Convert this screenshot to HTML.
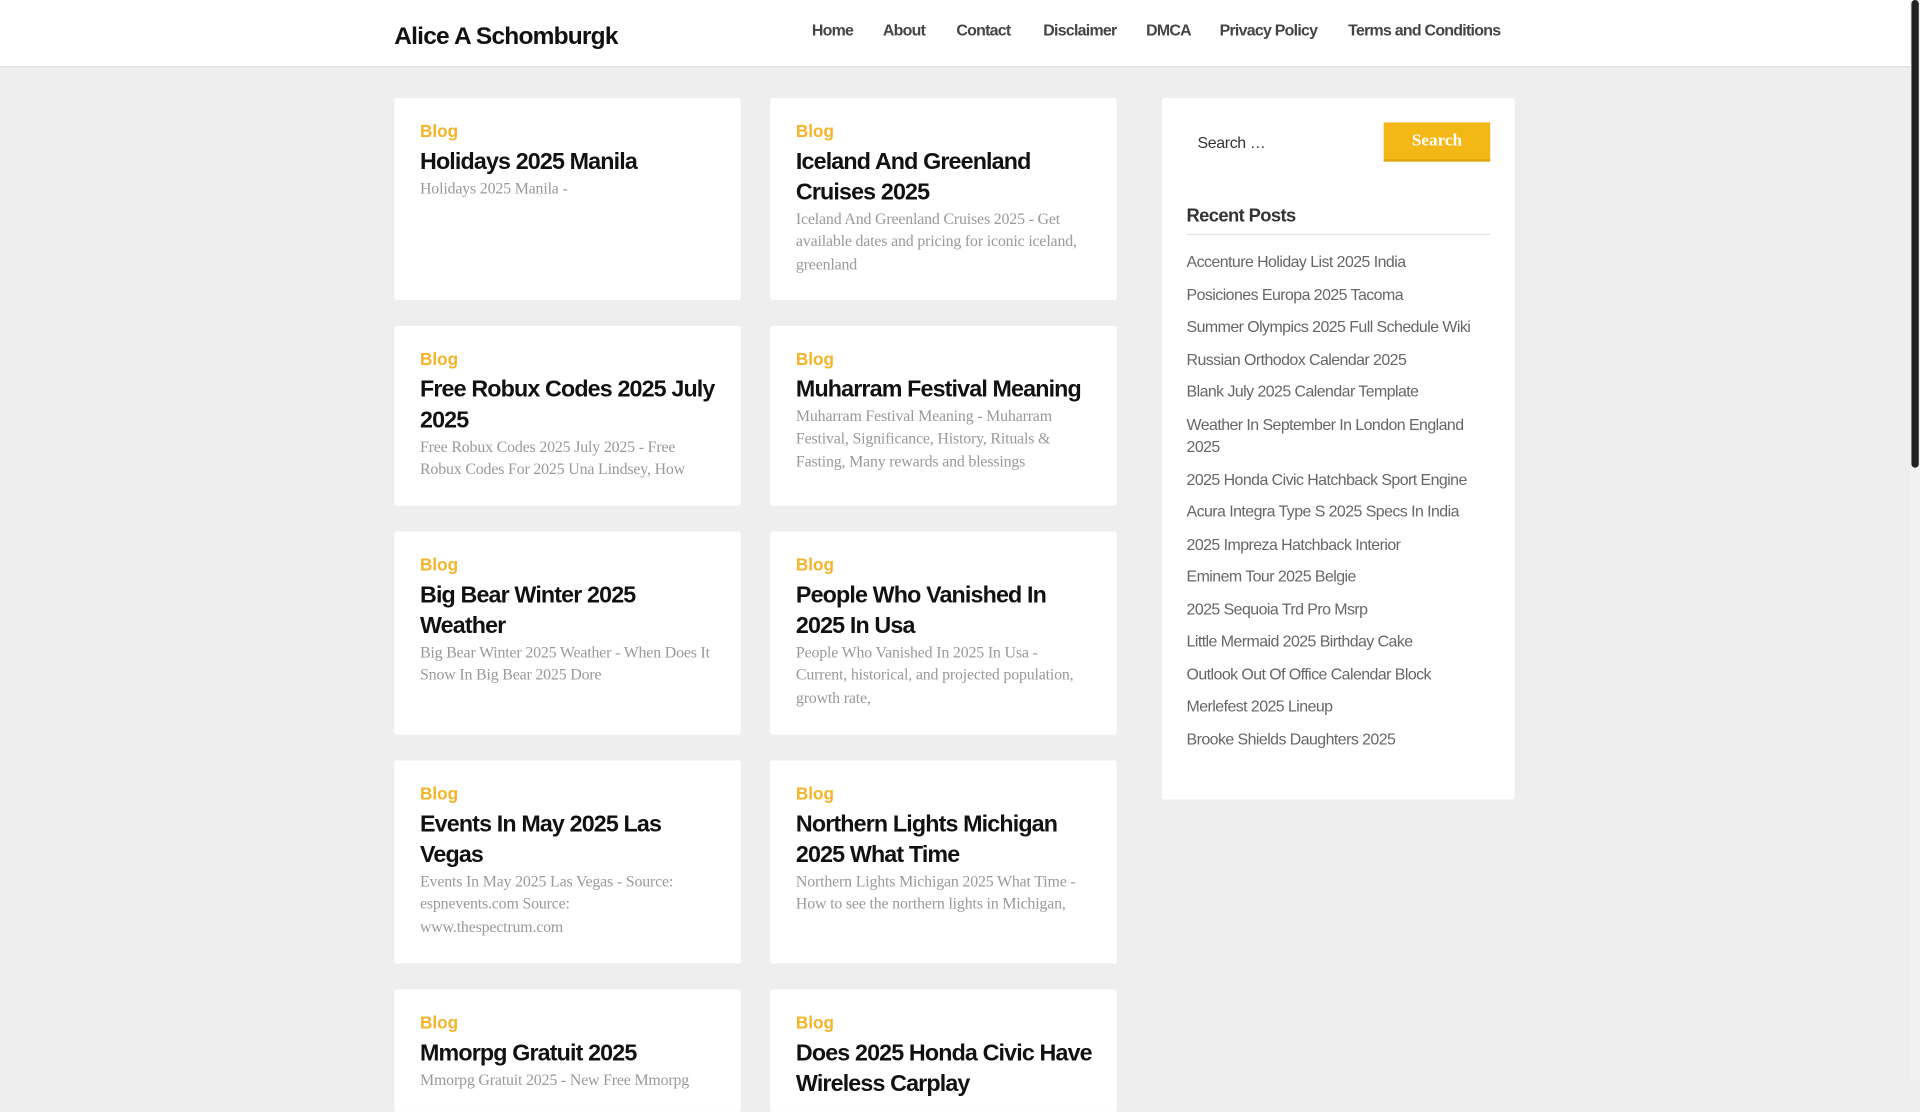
<!DOCTYPE html>
<html><head><meta charset="utf-8"><style>
html,body{margin:0;padding:0;overflow:hidden;width:1920px;height:1080px;background:#eee}
#w{position:absolute;left:0;top:0;width:1568px;height:882px;transform:scale(1.22449);transform-origin:0 0;font-family:"Liberation Sans",sans-serif;background:#eee}
.hdr{position:absolute;left:0;top:0;width:1560px;height:54px;background:#fff;border-bottom:1px solid #ddd}
.logo{position:absolute;left:322px;top:19px;font-size:20px;font-weight:bold;color:#111;letter-spacing:-0.65px}
.nav{position:absolute;top:17px;font-size:13px;font-weight:bold;color:#444;letter-spacing:-0.6px}
.card{position:absolute;background:#fff;border-radius:2px;box-sizing:border-box;padding:0 20px;width:283px}
.cat{position:absolute;left:21px;top:19px;font-size:14px;font-weight:bold;color:#f5b428}
.t{position:absolute;left:21px;right:14px;top:40px;font-size:19px;font-weight:bold;color:#111;line-height:25.3px;letter-spacing:-0.7px}
.ex{font-family:"Liberation Serif",serif;font-size:13px;line-height:18.3px;color:#999;position:absolute;left:21px;right:20px;letter-spacing:-0.15px}
.side{position:absolute;left:949px;top:80px;width:288px;height:573px;background:#fff;border-radius:2px}
.side li{list-style:none;font-size:13px;color:#666;line-height:18.5px;margin-bottom:8px;letter-spacing:-0.45px}
.sb{position:absolute;left:1560px;top:0;width:8px;height:882px;background:#f1f1f1}
.th{position:absolute;left:1561px;top:0;width:6px;height:382px;background:#222;border-radius:3px}
</style></head><body><div id="w">
<div class="hdr"></div>
<div class="logo">Alice A Schomburgk</div>
<div class="nav" style="left:663px">Home</div>
<div class="nav" style="left:721px">About</div>
<div class="nav" style="left:781px">Contact</div>
<div class="nav" style="left:852px">Disclaimer</div>
<div class="nav" style="left:936px">DMCA</div>
<div class="nav" style="left:996px">Privacy Policy</div>
<div class="nav" style="left:1101px">Terms and Conditions</div>

<div class="card" style="left:322px;top:80px;height:165px"><div class="cat">Blog</div><div class="t">Holidays 2025 Manila</div><div class="ex" style="top:65px">Holidays 2025 Manila -</div></div>
<div class="card" style="left:629px;top:80px;height:165px"><div class="cat">Blog</div><div class="t">Iceland And Greenland Cruises 2025</div><div class="ex" style="top:90px">Iceland And Greenland Cruises 2025 - Get available dates and pricing for iconic iceland, greenland</div></div>

<div class="card" style="left:322px;top:266px;height:147px"><div class="cat">Blog</div><div class="t">Free Robux Codes 2025 July 2025</div><div class="ex" style="top:90px">Free Robux Codes 2025 July 2025 - Free Robux Codes For 2025 Una Lindsey, How</div></div>
<div class="card" style="left:629px;top:266px;height:147px"><div class="cat">Blog</div><div class="t">Muharram Festival Meaning</div><div class="ex" style="top:65px">Muharram Festival Meaning - Muharram Festival, Significance, History, Rituals &amp; Fasting, Many rewards and blessings</div></div>

<div class="card" style="left:322px;top:434px;height:166px"><div class="cat">Blog</div><div class="t">Big Bear Winter 2025 Weather</div><div class="ex" style="top:90px">Big Bear Winter 2025 Weather - When Does It Snow In Big Bear 2025 Dore</div></div>
<div class="card" style="left:629px;top:434px;height:166px"><div class="cat">Blog</div><div class="t">People Who Vanished In 2025 In Usa</div><div class="ex" style="top:90px">People Who Vanished In 2025 In Usa - Current, historical, and projected population, growth rate,</div></div>

<div class="card" style="left:322px;top:621px;height:166px"><div class="cat">Blog</div><div class="t">Events In May 2025 Las Vegas</div><div class="ex" style="top:90px">Events In May 2025 Las Vegas - Source: espnevents.com Source: www.thespectrum.com</div></div>
<div class="card" style="left:629px;top:621px;height:166px"><div class="cat">Blog</div><div class="t">Northern Lights Michigan 2025 What Time</div><div class="ex" style="top:90px">Northern Lights Michigan 2025 What Time - How to see the northern lights in Michigan,</div></div>

<div class="card" style="left:322px;top:808px;height:100px"><div class="cat">Blog</div><div class="t">Mmorpg Gratuit 2025</div><div class="ex" style="top:65px">Mmorpg Gratuit 2025 - New Free Mmorpg</div></div>
<div class="card" style="left:629px;top:808px;height:100px"><div class="cat">Blog</div><div class="t">Does 2025 Honda Civic Have Wireless Carplay</div></div>

<div class="side">
<div style="position:absolute;left:29px;top:29px;font-size:13px;color:#333;letter-spacing:-0.3px">Search …</div>
<div style="position:absolute;left:181px;top:20px;width:87px;height:30px;background:#f3b716;border-bottom:2px solid #dea60e;color:#fff;font-family:'Liberation Serif',serif;font-weight:bold;font-size:14px;text-align:center;line-height:31px">Search</div>
<div style="position:absolute;left:20px;top:88px;font-size:15px;font-weight:bold;color:#333;letter-spacing:-0.5px">Recent Posts</div>
<div style="position:absolute;left:20px;top:111px;width:248px;height:1px;background:#e2e2e2"></div>
<ul style="position:absolute;left:20px;top:125px;width:250px;margin:0;padding:0">
<li>Accenture Holiday List 2025 India</li>
<li>Posiciones Europa 2025 Tacoma</li>
<li>Summer Olympics 2025 Full Schedule Wiki</li>
<li>Russian Orthodox Calendar 2025</li>
<li>Blank July 2025 Calendar Template</li>
<li>Weather In September In London England 2025</li>
<li>2025 Honda Civic Hatchback Sport Engine</li>
<li>Acura Integra Type S 2025 Specs In India</li>
<li>2025 Impreza Hatchback Interior</li>
<li>Eminem Tour 2025 Belgie</li>
<li>2025 Sequoia Trd Pro Msrp</li>
<li>Little Mermaid 2025 Birthday Cake</li>
<li>Outlook Out Of Office Calendar Block</li>
<li>Merlefest 2025 Lineup</li>
<li>Brooke Shields Daughters 2025</li>
</ul>
</div>
<div class="sb"></div><div class="th"></div>
</div></body></html>
